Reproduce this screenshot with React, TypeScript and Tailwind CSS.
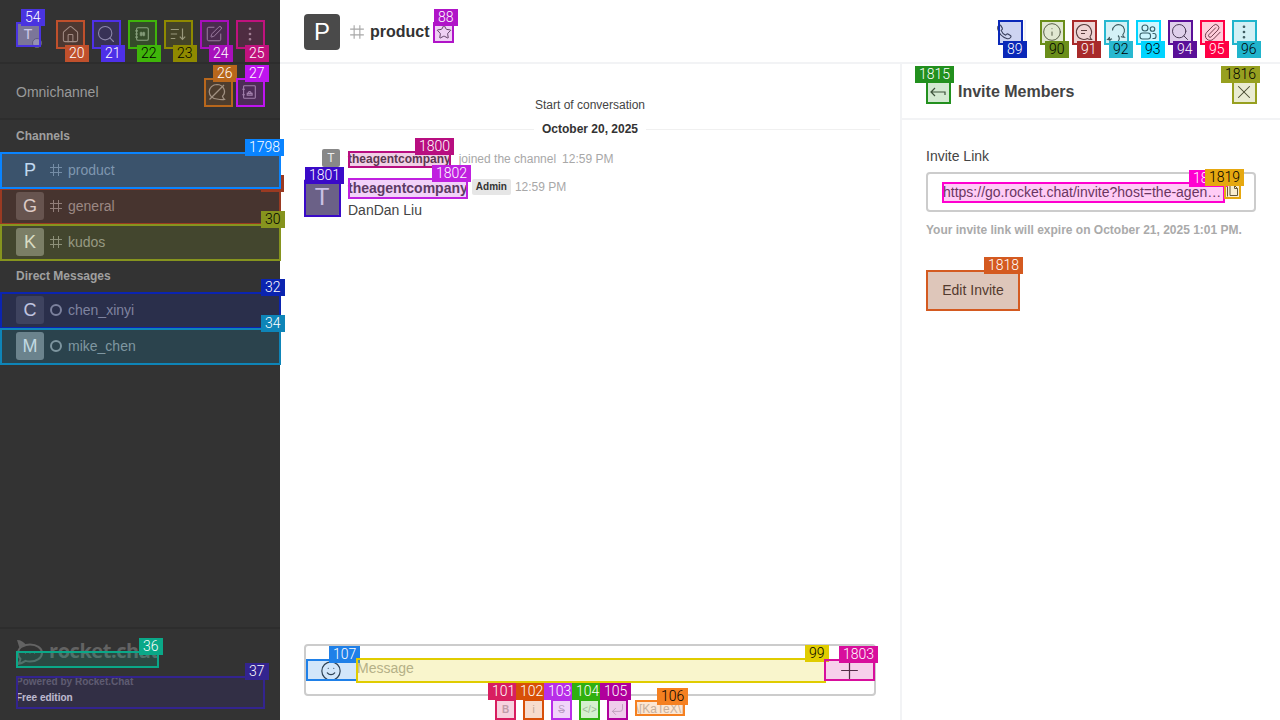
import React from "react";
import { Home, Search, SquarePen, EllipsisVertical, Star, Info, Paperclip, Smile, Plus, X, CornerDownLeft } from "lucide-react";

function Hash({ className }: { className: string }) {
  return (
    <svg viewBox="0 0 14 14" fill="none" stroke="currentColor" strokeWidth="1" className={className}>
      <path d="M4.5 1v12M9.5 1v12M1 4.5h12M1 9.5h12" />
    </svg>
  );
}

function Tag({ box, label, text }: { box: string; label: string; text: string }) {
  return (
    <>
      <div className={`absolute border-2 box-border ${box}`} />
      <div className={`absolute h-[17px] px-1 text-[14px] leading-[17px] font-light whitespace-nowrap font-['Roboto',sans-serif] ${label}`}>{text}</div>
    </>
  );
}

function Overlays() {
  return (
    <div className="absolute inset-0 pointer-events-none overflow-hidden">
      <div className="absolute left-[281px] top-[175px] w-[3px] h-[17px] bg-[#9a3a22]" />
      <div className="absolute left-[261px] top-[189px] w-[23px] h-[3px] bg-[#9a3a22]" />
      <Tag box="left-[16px] top-[22px] w-[25px] h-[25px] border-[#4a34e0] bg-[#4a34e0]/20" label="left-[21px] top-[9px] bg-[#4a34e0] text-white" text="54" />
      <Tag box="left-[56px] top-[20px] w-[29px] h-[29px] border-[#c0502c] bg-[#c0502c]/20" label="left-[65px] top-[45px] bg-[#c0502c] text-white" text="20" />
      <Tag box="left-[92px] top-[20px] w-[29px] h-[29px] border-[#4e30e8] bg-[#4e30e8]/20" label="left-[101px] top-[45px] bg-[#4e30e8] text-white" text="21" />
      <Tag box="left-[128px] top-[20px] w-[29px] h-[29px] border-[#3fb50a] bg-[#3fb50a]/20" label="left-[137px] top-[45px] bg-[#3fb50a] text-black" text="22" />
      <Tag box="left-[164px] top-[20px] w-[29px] h-[29px] border-[#8f8a00] bg-[#8f8a00]/20" label="left-[173px] top-[45px] bg-[#8f8a00] text-black" text="23" />
      <Tag box="left-[200px] top-[20px] w-[29px] h-[29px] border-[#a80fbc] bg-[#a80fbc]/20" label="left-[209px] top-[45px] bg-[#a80fbc] text-white" text="24" />
      <Tag box="left-[236px] top-[20px] w-[29px] h-[29px] border-[#c0127e] bg-[#c0127e]/20" label="left-[245px] top-[45px] bg-[#c0127e] text-white" text="25" />
      <Tag box="left-[204px] top-[78px] w-[29px] h-[29px] border-[#b8671c] bg-[#b8671c]/20" label="left-[213px] top-[65px] bg-[#b8671c] text-white" text="26" />
      <Tag box="left-[236px] top-[78px] w-[29px] h-[29px] border-[#bf14f0] bg-[#bf14f0]/20" label="left-[245px] top-[65px] bg-[#bf14f0] text-white" text="27" />
      <Tag box="left-0 top-[188px] w-[281px] h-[37px] border-[#9a3a22] bg-[#9a3a22]/20" label="hidden" text="" />
      <Tag box="left-0 top-[152px] w-[281px] h-[37px] border-[#0a84ff] bg-[#0a84ff]/20" label="left-[245px] top-[139px] bg-[#0a84ff] text-white" text="1798" />
      <Tag box="left-0 top-[224px] w-[281px] h-[37px] border-[#86941e] bg-[#86941e]/20" label="left-[261px] top-[211px] bg-[#86941e] text-black" text="30" />
      <Tag box="left-0 top-[292px] w-[281px] h-[37px] border-[#0b24b0] bg-[#0b24b0]/20" label="left-[261px] top-[279px] bg-[#0b24b0] text-white" text="32" />
      <Tag box="left-0 top-[328px] w-[281px] h-[37px] border-[#0e85b8] bg-[#0e85b8]/20" label="left-[261px] top-[315px] bg-[#0e85b8] text-white" text="34" />
      <Tag box="left-[16px] top-[651px] w-[143px] h-[17px] border-[#0aa888] bg-[#0aa888]/20" label="left-[139px] top-[638px] bg-[#0aa888] text-white" text="36" />
      <Tag box="left-[16px] top-[676px] w-[249px] h-[33px] border-[#33248f] bg-[#33248f]/20" label="left-[245px] top-[663px] bg-[#33248f] text-white" text="37" />

      <Tag box="left-[433px] top-[22px] w-[21px] h-[21px] border-[#b014c8] bg-[#b014c8]/20" label="left-[434px] top-[9px] bg-[#b014c8] text-white" text="88" />
      <Tag box="left-[348px] top-[151px] w-[103px] h-[17px] border-[#b80e80] bg-[#b80e80]/20" label="left-[415px] top-[138px] bg-[#b80e80] text-white" text="1800" />
      <Tag box="left-[304px] top-[180px] w-[37px] h-[37px] border-[#3a0ac8] bg-[#3a0ac8]/20" label="left-[305px] top-[167px] bg-[#3a0ac8] text-white" text="1801" />
      <Tag box="left-[348px] top-[178px] w-[120px] h-[21px] border-[#c020e0] bg-[#c020e0]/20" label="left-[432px] top-[165px] bg-[#c020e0] text-white" text="1802" />

      <Tag box="left-[998px] top-[20px] w-[25px] h-[25px] border-[#0a28b8] bg-[#0a28b8]/20" label="left-[1003px] top-[41px] bg-[#0a28b8] text-white" text="89" />
      <Tag box="left-[1040px] top-[20px] w-[25px] h-[25px] border-[#6a8e1a] bg-[#6a8e1a]/20" label="left-[1045px] top-[41px] bg-[#6a8e1a] text-black" text="90" />
      <Tag box="left-[1072px] top-[20px] w-[25px] h-[25px] border-[#a82a2a] bg-[#a82a2a]/20" label="left-[1077px] top-[41px] bg-[#a82a2a] text-white" text="91" />
      <Tag box="left-[1104px] top-[20px] w-[25px] h-[25px] border-[#28b8d0] bg-[#28b8d0]/20" label="left-[1109px] top-[41px] bg-[#28b8d0] text-black" text="92" />
      <Tag box="left-[1136px] top-[20px] w-[25px] h-[25px] border-[#00d4ff] bg-[#00d4ff]/20" label="left-[1141px] top-[41px] bg-[#00d4ff] text-black" text="93" />
      <Tag box="left-[1168px] top-[20px] w-[25px] h-[25px] border-[#5a1098] bg-[#5a1098]/20" label="left-[1173px] top-[41px] bg-[#5a1098] text-white" text="94" />
      <Tag box="left-[1200px] top-[20px] w-[25px] h-[25px] border-[#ff0044] bg-[#ff0044]/20" label="left-[1205px] top-[41px] bg-[#ff0044] text-white" text="95" />
      <Tag box="left-[1232px] top-[20px] w-[25px] h-[25px] border-[#20b4cc] bg-[#20b4cc]/20" label="left-[1237px] top-[41px] bg-[#20b4cc] text-black" text="96" />

      <Tag box="left-[926px] top-[79px] w-[25px] h-[25px] border-[#22901e] bg-[#22901e]/20" label="left-[915px] top-[66px] bg-[#22901e] text-white" text="1815" />
      <Tag box="left-[1232px] top-[79px] w-[25px] h-[25px] border-[#97a020] bg-[#97a020]/20" label="left-[1221px] top-[66px] bg-[#97a020] text-black" text="1816" />
      <Tag box="left-[942px] top-[182px] w-[283px] h-[21px] border-[#ff00d0] bg-[#ff00d0]/20" label="left-[1189px] top-[170px] bg-[#ff00d0] text-white" text="1817" />
      <Tag box="left-[1224px] top-[183px] w-[17px] h-[16px] border-[#e6a810] bg-[#e6a810]/20" label="left-[1205px] top-[169px] bg-[#e6a810] text-black" text="1819" />
      <Tag box="left-[926px] top-[270px] w-[94px] h-[41px] border-[#d45a20] bg-[#d45a20]/20" label="left-[984px] top-[257px] bg-[#d45a20] text-white" text="1818" />

      <Tag box="left-[306px] top-[659px] w-[52px] h-[22px] border-[#1f80e8] bg-[#1f80e8]/20" label="left-[329px] top-[646px] bg-[#1f80e8] text-white" text="107" />
      <Tag box="left-[356px] top-[658px] w-[470px] h-[25px] border-[#e0cc00] bg-[#e0cc00]/20" label="left-[805px] top-[645px] bg-[#e0cc00] text-black" text="99" />
      <Tag box="left-[824px] top-[659px] w-[51px] h-[22px] border-[#d80e9c] bg-[#d80e9c]/20" label="left-[839px] top-[646px] bg-[#d80e9c] text-white" text="1803" />
      <Tag box="left-[495px] top-[699px] w-[21px] h-[21px] border-[#d81e60] bg-[#d81e60]/20" label="left-[488px] top-[683px] bg-[#d81e60] text-white" text="101" />
      <Tag box="left-[523px] top-[699px] w-[21px] h-[21px] border-[#d85008] bg-[#d85008]/20" label="left-[516px] top-[683px] bg-[#d85008] text-white" text="102" />
      <Tag box="left-[551px] top-[699px] w-[21px] h-[21px] border-[#b82ee8] bg-[#b82ee8]/20" label="left-[544px] top-[683px] bg-[#b82ee8] text-white" text="103" />
      <Tag box="left-[579px] top-[699px] w-[21px] h-[21px] border-[#30b010] bg-[#30b010]/20" label="left-[572px] top-[683px] bg-[#30b010] text-white" text="104" />
      <Tag box="left-[607px] top-[699px] w-[21px] h-[21px] border-[#b0009c] bg-[#b0009c]/20" label="left-[600px] top-[683px] bg-[#b0009c] text-white" text="105" />
      <Tag box="left-[635px] top-[700px] w-[50px] h-[16px] border-[#f58020] bg-[#f58020]/20" label="left-[657px] top-[688px] bg-[#f58020] text-black" text="106" />
    </div>
  );
}

function SideBtn({ children }: { children: React.ReactNode }) {
  return <div className="w-7 h-7 flex items-center justify-center text-[#9c9c9c]">{children}</div>;
}

function SideRow({ letter, avatar, name, dm, active }: { letter: string; avatar: string; name: string; dm?: boolean; active?: boolean }) {
  return (
    <div className={`h-9 px-4 flex items-center gap-[5px] ${active ? "bg-[#484848]" : ""}`}>
      <div className={`w-7 h-7 rounded-[3px] flex items-center justify-center text-[18px] text-[#eeeeee] ${avatar}`}>{letter}</div>
      {dm ? (
        <div className="w-[14px] h-[14px] flex items-center justify-center">
          <div className="w-3 h-3 rounded-full border-2 border-[#999999]" />
        </div>
      ) : (
        <Hash className="w-[14px] h-[14px] text-[#8f8f8f]" />
      )}
      <span className="text-[14px] text-[#9c9c9c]">{name}</span>
    </div>
  );
}

function HeadBtn({ children }: { children: React.ReactNode }) {
  return <div className="w-6 h-6 flex items-center justify-center text-[#444444]">{children}</div>;
}

export default function App() {
  return (
    <div className="relative flex w-[1280px] h-[720px] overflow-hidden bg-white font-['Liberation_Sans',Arial,sans-serif]">
      <aside className="w-[280px] shrink-0 h-full bg-[#333333] flex flex-col">
        <div className="h-[64px] shrink-0 border-b-2 border-[#2d2d2d] pl-4 flex items-center">
          <div className="relative w-6 h-6 rounded-[2px] bg-[#888888] text-[#eeeeee] text-[14px] flex items-center justify-center mt-[6px]">
            T
            <div className="absolute right-[-2px] bottom-[-2px] w-[10px] h-[10px] rounded-full bg-[#a8a8a8] border border-[#666666]" />
          </div>
          <div className="ml-4 flex gap-2 mt-[6px]">
            <SideBtn><Home size={19} strokeWidth={1.3} /></SideBtn>
            <SideBtn><Search size={20} strokeWidth={1.3} /></SideBtn>
            <SideBtn>
              <svg viewBox="0 0 20 20" fill="none" stroke="currentColor" strokeWidth="1.2" className="w-[18px] h-[18px]">
                <rect x="4" y="3" width="13" height="14" rx="1.5" />
                <path d="M2.5 6.5h3M2.5 10h3M2.5 13.5h3M9 7.5v5M12 7.5v5M7.5 9h6M7.5 11h6" />
              </svg>
            </SideBtn>
            <SideBtn>
              <svg viewBox="0 0 20 20" fill="none" stroke="currentColor" strokeWidth="1.3" className="w-[18px] h-[18px]">
                <path d="M2 5h9M2 10h7M2 15h5M15 4v12M12 13l3 3 3-3" />
              </svg>
            </SideBtn>
            <SideBtn><SquarePen size={18} strokeWidth={1.3} /></SideBtn>
            <SideBtn><EllipsisVertical size={18} strokeWidth={1.6} /></SideBtn>
          </div>
        </div>
        <div className="h-[56px] shrink-0 border-b-2 border-[#2d2d2d] pl-4 pr-[16px] pt-[2px] flex items-center justify-between">
          <span className="text-[14px] text-[#9a9a9a]">Omnichannel</span>
          <div className="flex gap-1 mr-[1px]">
            <SideBtn>
              <svg viewBox="0 0 20 20" fill="none" stroke="currentColor" strokeWidth="1.2" className="w-[20px] h-[20px]">
                <path d="M10 2.500a7.500 7 0 1 0 0 14.500c2 .5 5 1 7.500.5-1-.8-1.800-2-2-3.300A7.500 7 0 0 0 10 2.500Z" />
                <path d="M2.500 17.500 17 3" />
              </svg>
            </SideBtn>
            <SideBtn>
              <svg viewBox="0 0 20 20" fill="none" stroke="currentColor" strokeWidth="1.2" className="w-[18px] h-[18px]">
                <rect x="4" y="3" width="13" height="14" rx="1" />
                <path d="M2.500 7h3M2.500 13h3M8 13.500v-2h5.500v2ZM9.300 11.500a1.500 1.500 0 1 1 2.800 0" />
              </svg>
            </SideBtn>
          </div>
        </div>
        <div className="h-8 shrink-0 px-4 flex items-center text-[12px] font-bold text-[#a0a0a0]">Channels</div>
        <SideRow letter="P" avatar="bg-[#484848]" name="product" active />
        <SideRow letter="G" avatar="bg-[#5a5a5a]" name="general" />
        <SideRow letter="K" avatar="bg-[#787878]" name="kudos" />
        <div className="h-8 shrink-0 px-4 flex items-center text-[12px] font-bold text-[#a0a0a0]">Direct Messages</div>
        <SideRow letter="C" avatar="bg-[#4b4b4b]" name="chen_xinyi" dm />
        <SideRow letter="M" avatar="bg-[#828282]" name="mike_chen" dm />
        <div className="mt-auto h-[93px] shrink-0 border-t-2 border-[#2d2d2d] px-4 pt-[11px]">
          <div className="flex items-center h-[25px] gap-[5px] text-[#636363]">
            <svg viewBox="0 0 28 25" fill="none" stroke="currentColor" strokeWidth="2" className="w-[28px] h-[25px] shrink-0">
              <path d="M6 6.500C9 5 12 4.500 14 4.500c6.500 0 12 3.500 12 8.500s-5.500 8.500-12 8.500c-1.500 0-3-.2-4.500-.6-2 1.500-4.500 2.600-7.500 3 1.300-1.500 2.300-3.200 2.500-5C3 17.500 2 15.500 2 13c0-2.500 1.500-5 4-6.500Z" />
              <path d="M1 0c4 0 7 2 9 5-3 .5-5 1.500-6.500 3Z" fill="currentColor" stroke="none" />
              <path d="M9 13h1M13.500 13h1M18 13h1" strokeWidth="1.500" />
            </svg>
            <span className="text-[20px] leading-[25px] font-bold font-['Open_Sans',sans-serif] tracking-[-0.45px] mt-[-5px]">rocket.chat</span>
          </div>
          <div className="mt-[10px] text-[10px] font-bold leading-[14px] text-[#6a6a6a] whitespace-nowrap">Powered by Rocket.Chat</div>
          <div className="mt-[2px] text-[10px] font-bold leading-[14px] text-[#e0e0e0]">Free edition</div>
        </div>
      </aside>

      <main className="flex-1 min-w-0 flex flex-col">
        <header className="h-[64px] shrink-0 border-b-2 border-[#f2f3f5] pl-6 pr-6 pt-[2px] flex items-center">
          <div className="w-9 h-9 rounded-[4px] bg-[#4a4a4a] text-white text-[24px] flex items-center justify-center">P</div>
          <Hash className="w-4 h-4 ml-[9px] text-[#a8a8a8]" />
          <span className="ml-[5px] text-[16px] font-bold text-[#333333]">product</span>
          <div className="ml-[4px] w-[20px] h-[20px] flex items-center justify-center text-[#333333]"><Star size={16} strokeWidth={1.3} /></div>
          <div className="ml-auto flex items-center">
            <HeadBtn>
              <svg viewBox="0 0 20 20" fill="none" stroke="currentColor" strokeWidth="1.2" strokeLinejoin="round" className="w-[18px] h-[18px]">
                <path d="M4.500 2.500c.8-.5 1.600-.3 2 .4l1.600 2.800c.3.6.2 1.200-.3 1.600l-1 .9c.9 2.500 2.600 4.300 5 5.400l1-1c.4-.5 1-.6 1.600-.3l2.700 1.500c.7.400.9 1.300.4 2-.9 1.400-2.300 2-3.800 1.600C8.500 15.800 4.200 11.500 3 6.500c-.4-1.600.2-3 1.500-4Z" />
              </svg>
            </HeadBtn>
            <div className="w-[2px] h-[25px] bg-[#f2f3f5] mx-2" />
            <div className="ml-[6px] flex gap-2">
              <HeadBtn><Info size={20} strokeWidth={1.1} /></HeadBtn>
              <HeadBtn>
                <svg viewBox="0 0 20 20" fill="none" stroke="currentColor" strokeWidth="1.1" className="w-[20px] h-[20px]">
                  <path d="M10 2.500a7.500 7.500 0 1 0 3.500 14.100c1 .7 2.500 1 4 .9-.8-.8-1.300-1.800-1.500-3A7.500 7.500 0 0 0 10 2.500Z" />
                  <path d="M7 8.500h6M7 11.500h4" />
                </svg>
              </HeadBtn>
              <HeadBtn>
                <svg viewBox="0 0 20 20" fill="none" stroke="currentColor" strokeWidth="1.1" className="w-[20px] h-[20px]">
                  <path d="M6.500 8.500A6 6 0 1 1 16.800 12.800c.2 1 .7 1.800 1.500 2.400-1.300.1-2.500-.1-3.400-.7" />
                  <path d="M12 13.500a5 4.500 0 1 1-8.500 1.500c-.2.9-.9 1.800-1.800 2.500 1.600.2 3.300-.1 4.300-.7" />
                </svg>
              </HeadBtn>
              <HeadBtn>
                <svg viewBox="0 0 20 20" fill="none" stroke="currentColor" strokeWidth="1.1" className="w-[20px] h-[20px]">
                  <circle cx="7" cy="6" r="3" />
                  <circle cx="14.500" cy="7" r="2.300" />
                  <rect x="2" y="11" width="10.500" height="6" rx="2.500" />
                  <path d="M14.500 11.500h1.500a2 2 0 0 1 2 2v1a2 2 0 0 1-2 2h-1.500" />
                </svg>
              </HeadBtn>
              <HeadBtn><Search size={20} strokeWidth={1.2} /></HeadBtn>
              <HeadBtn><Paperclip size={19} strokeWidth={1.2} /></HeadBtn>
              <HeadBtn><EllipsisVertical size={18} strokeWidth={1.6} /></HeadBtn>
            </div>
          </div>
        </header>
        <div className="flex-1 min-h-0 flex">
          <section className="w-[620px] shrink-0 flex flex-col">
            <div className="flex-1 min-h-0 flex flex-col">
              <div className="pt-[33px] text-center text-[12px] leading-[16px] text-[#444444]">Start of conversation</div>
              <div className="mt-[8px] mx-5 flex items-center gap-2">
                <div className="flex-1 h-px bg-[#f0f0f0]" />
                <span className="text-[12px] leading-[16px] font-bold text-[#333333]">October 20, 2025</span>
                <div className="flex-1 h-px bg-[#f0f0f0]" />
              </div>
              <div className="mt-[12px] pl-[42px] flex items-center h-[18px]">
                <div className="w-[18px] h-[18px] rounded-[2px] bg-[#888888] text-[#eeeeee] text-[12px] flex items-center justify-center">T</div>
                <span className="ml-2 text-[12px] font-bold text-[#444444] mt-[1px]">theagentcompany</span>
                <span className="ml-2 text-[12px] text-[#a8a8a8] mt-[1px]">joined the channel</span>
                <span className="ml-[6px] text-[12px] text-[#a8a8a8] mt-[1px]">12:59 PM</span>
              </div>
              <div className="mt-[12px] pl-6 flex">
                <div className="w-9 h-9 rounded-[2px] bg-[#777777] text-[#eeeeee] text-[24px] flex items-center justify-center">T</div>
                <div className="ml-2">
                  <div className="flex items-center h-[16px]">
                    <span className="text-[14px] font-bold text-[#444444] mt-[3px]">theagentcompany</span>
                    <span className="ml-1 h-4 px-[4px] rounded-[2px] bg-[#e6e6e6] text-[10px] font-bold leading-[16px] text-[#333333]">Admin</span>
                    <span className="ml-1 text-[12px] text-[#a8a8a8]">12:59 PM</span>
                  </div>
                  <div className="mt-[7px] text-[14px] leading-[16px] text-[#444444]">DanDan Liu</div>
                </div>
              </div>
            </div>
            <div className="mx-6 h-[52px] shrink-0 border-2 border-[#cccccc] rounded-[4px] flex items-center pt-[1px]">
              <div className="w-[50px] flex items-center justify-center text-[#333333]"><Smile size={22} strokeWidth={1.3} /></div>
              <span className="flex-1 text-[14px] text-[#aaaaaa] mt-[-5px] ml-[1px]">Message</span>
              <div className="w-[50px] flex items-center justify-center text-[#333333]"><Plus size={27} strokeWidth={1.1} /></div>
            </div>
            <div className="h-[24px] shrink-0 pl-[215px] pt-[3px] flex gap-[7px] text-[#bbbbbb]">
              <div className="w-[21px] h-[21px] flex items-center justify-center text-[10px] font-bold">B</div>
              <div className="w-[21px] h-[21px] flex items-center justify-center text-[10px]">i</div>
              <div className="w-[21px] h-[21px] flex items-center justify-center text-[10px] line-through">S</div>
              <div className="w-[21px] h-[21px] flex items-center justify-center text-[10px]">&lt;/&gt;</div>
              <div className="w-[21px] h-[21px] flex items-center justify-center"><CornerDownLeft size={15} strokeWidth={1.3} /></div>
              <div className="w-[50px] h-[16px] mt-[2px] flex items-center justify-center text-[12px] whitespace-nowrap overflow-hidden">\[KaTeX\]</div>
            </div>
          </section>
          <section className="flex-1 min-w-0 border-l-2 border-[#f2f3f5] flex flex-col">
            <div className="h-[56px] shrink-0 border-b-2 border-[#f2f3f5] px-6 pt-[2px] flex items-center">
              <div className="w-6 h-6 flex items-center justify-center text-[#444444]">
                <svg viewBox="0 0 20 20" fill="none" stroke="currentColor" strokeWidth="1.2" className="w-[20px] h-[20px]">
                  <path d="M7 6 3 10l4 4M3 10h14v3" />
                </svg>
              </div>
              <span className="ml-2 text-[16px] font-bold text-[#444444]">Invite Members</span>
              <div className="ml-auto w-6 h-6 flex items-center justify-center text-[#333333]"><X size={22} strokeWidth={1.1} /></div>
            </div>
            <div className="px-6 pt-[28px]">
              <div className="text-[14px] leading-[16px] text-[#444444]">Invite Link</div>
              <div className="mt-2 h-10 border-2 border-[#cccccc] rounded-[4px] pl-[15px] pr-[14px] flex items-center">
                <span className="flex-1 min-w-0 truncate text-[14px] text-[#444444] mt-[1px]">https://go.rocket.chat/invite?host=the-agent-company.rocket.chat&amp;rid=xyz</span>
                <div className="w-4 h-4 ml-[1px] mt-[-2px] flex items-center justify-center text-[#444444]">
                  <svg viewBox="0 0 14 14" fill="none" stroke="currentColor" strokeWidth="1" className="w-[14px] h-[14px]">
                    <path d="M5 1.500h4.500l3 3v7H5ZM9.500 1.500v3h3M2.500 3v9.500" />
                  </svg>
                </div>
              </div>
              <div className="mt-[10px] text-[12px] leading-[16px] font-bold text-[#aaaaaa]">Your invite link will expire on October 21, 2025 1:01 PM.</div>
              <div className="mt-[32px] w-[94px] h-[41px] rounded-[2px] bg-[#e2e2e2] flex items-center justify-center text-[14px] text-[#333333]">Edit Invite</div>
            </div>
          </section>
        </div>
      </main>
      <Overlays />
    </div>
  );
}
